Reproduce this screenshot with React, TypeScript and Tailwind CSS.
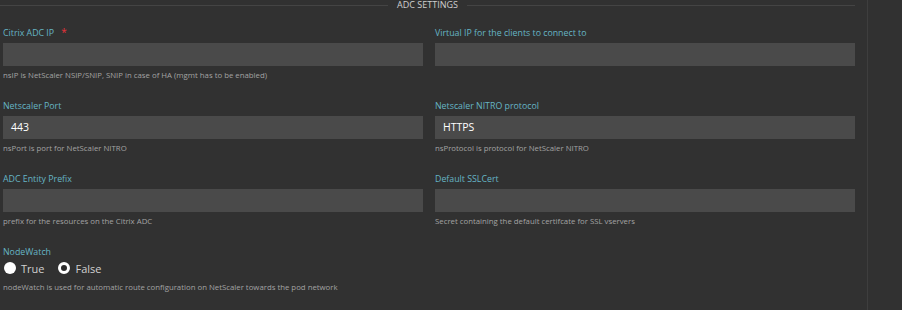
import React from 'react';

interface FieldProps {
  label: string;
  value?: string;
  help: string;
  required?: boolean;
}

function Field({ label, value, help, required }: FieldProps) {
  return (
    <div className="flex flex-col">
      <label className="h-[14px] text-[8.8px] leading-[14px] text-[#66b5c5] flex items-center">
        {label}
        {required && <span className="ml-[7px] text-[#e8313a] text-[10px] leading-none -mt-[3px]">*</span>}
      </label>
      <div className="mt-[3px] h-[23px] bg-[#4a4a4a] flex items-center pl-[8px] text-[10.5px] text-white">
        {value}
      </div>
      <p className="mt-[3px] h-[12px] text-[7.8px] leading-[12px] text-[#a3a3a3]">{help}</p>
    </div>
  );
}

function Radio({ label, checked }: { label: string; checked?: boolean }) {
  return (
    <label className="flex items-center gap-[5px] text-[11px] text-[#d0d0d0]">
      {checked ? (
        <span className="w-[12px] h-[12px] rounded-full border-[3px] border-white bg-[#2c2c2c]" />
      ) : (
        <span className="w-[12px] h-[12px] rounded-full bg-white" />
      )}
      <span className="mt-[2px]">{label}</span>
    </label>
  );
}

export default function App() {
  return (
    <div className="w-[902px] h-[310px] bg-[#313131] flex overflow-hidden" style={{ fontFamily: '"Open Sans", "Noto Sans", sans-serif' }}>
      <div className="w-[867px] pr-[12px] shrink-0">
        {/* Section header */}
        <div className="h-[10px] flex items-center gap-[9px]">
          <div className="flex-1 h-px bg-[#444]" />
          <span className="text-[9px] leading-[10px] text-[#cfcfcf]">ADC SETTINGS</span>
          <div className="flex-1 h-px bg-[#444]" />
        </div>

        <div className="pl-[3px] mt-[16px] grid grid-cols-2 gap-x-[12px] gap-y-[18px]">
          <Field label="Citrix ADC IP" required help="nsIP is NetScaler NSIP/SNIP, SNIP in case of HA (mgmt has to be enabled)" />
          <Field label="Virtual IP for the clients to connect to" help="" />
          <Field label="Netscaler Port" value="443" help="nsPort is port for NetScaler NITRO" />
          <Field label="Netscaler NITRO protocol" value="HTTPS" help="nsProtocol is protocol for NetScaler NITRO" />
          <Field label="ADC Entity Prefix" help="prefix for the resources on the Citrix ADC" />
          <Field label="Default SSLCert" help="Secret containing the default certifcate for SSL vservers" />

          <div className="col-span-2 flex flex-col">
            <label className="h-[14px] text-[8.8px] leading-[14px] text-[#66b5c5]">NodeWatch</label>
            <div className="mt-[2px] h-[14px] flex items-center gap-[14px] pl-[1px]">
              <Radio label="True" />
              <Radio label="False" checked />
            </div>
            <p className="mt-[6px] h-[12px] text-[7.8px] leading-[12px] text-[#a3a3a3]">
              nodeWatch is used for automatic route configuration on NetScaler towards the pod network
            </p>
          </div>
        </div>
      </div>
      <div className="flex-1 border-l border-[#3e3e3e]" />
    </div>
  );
}
